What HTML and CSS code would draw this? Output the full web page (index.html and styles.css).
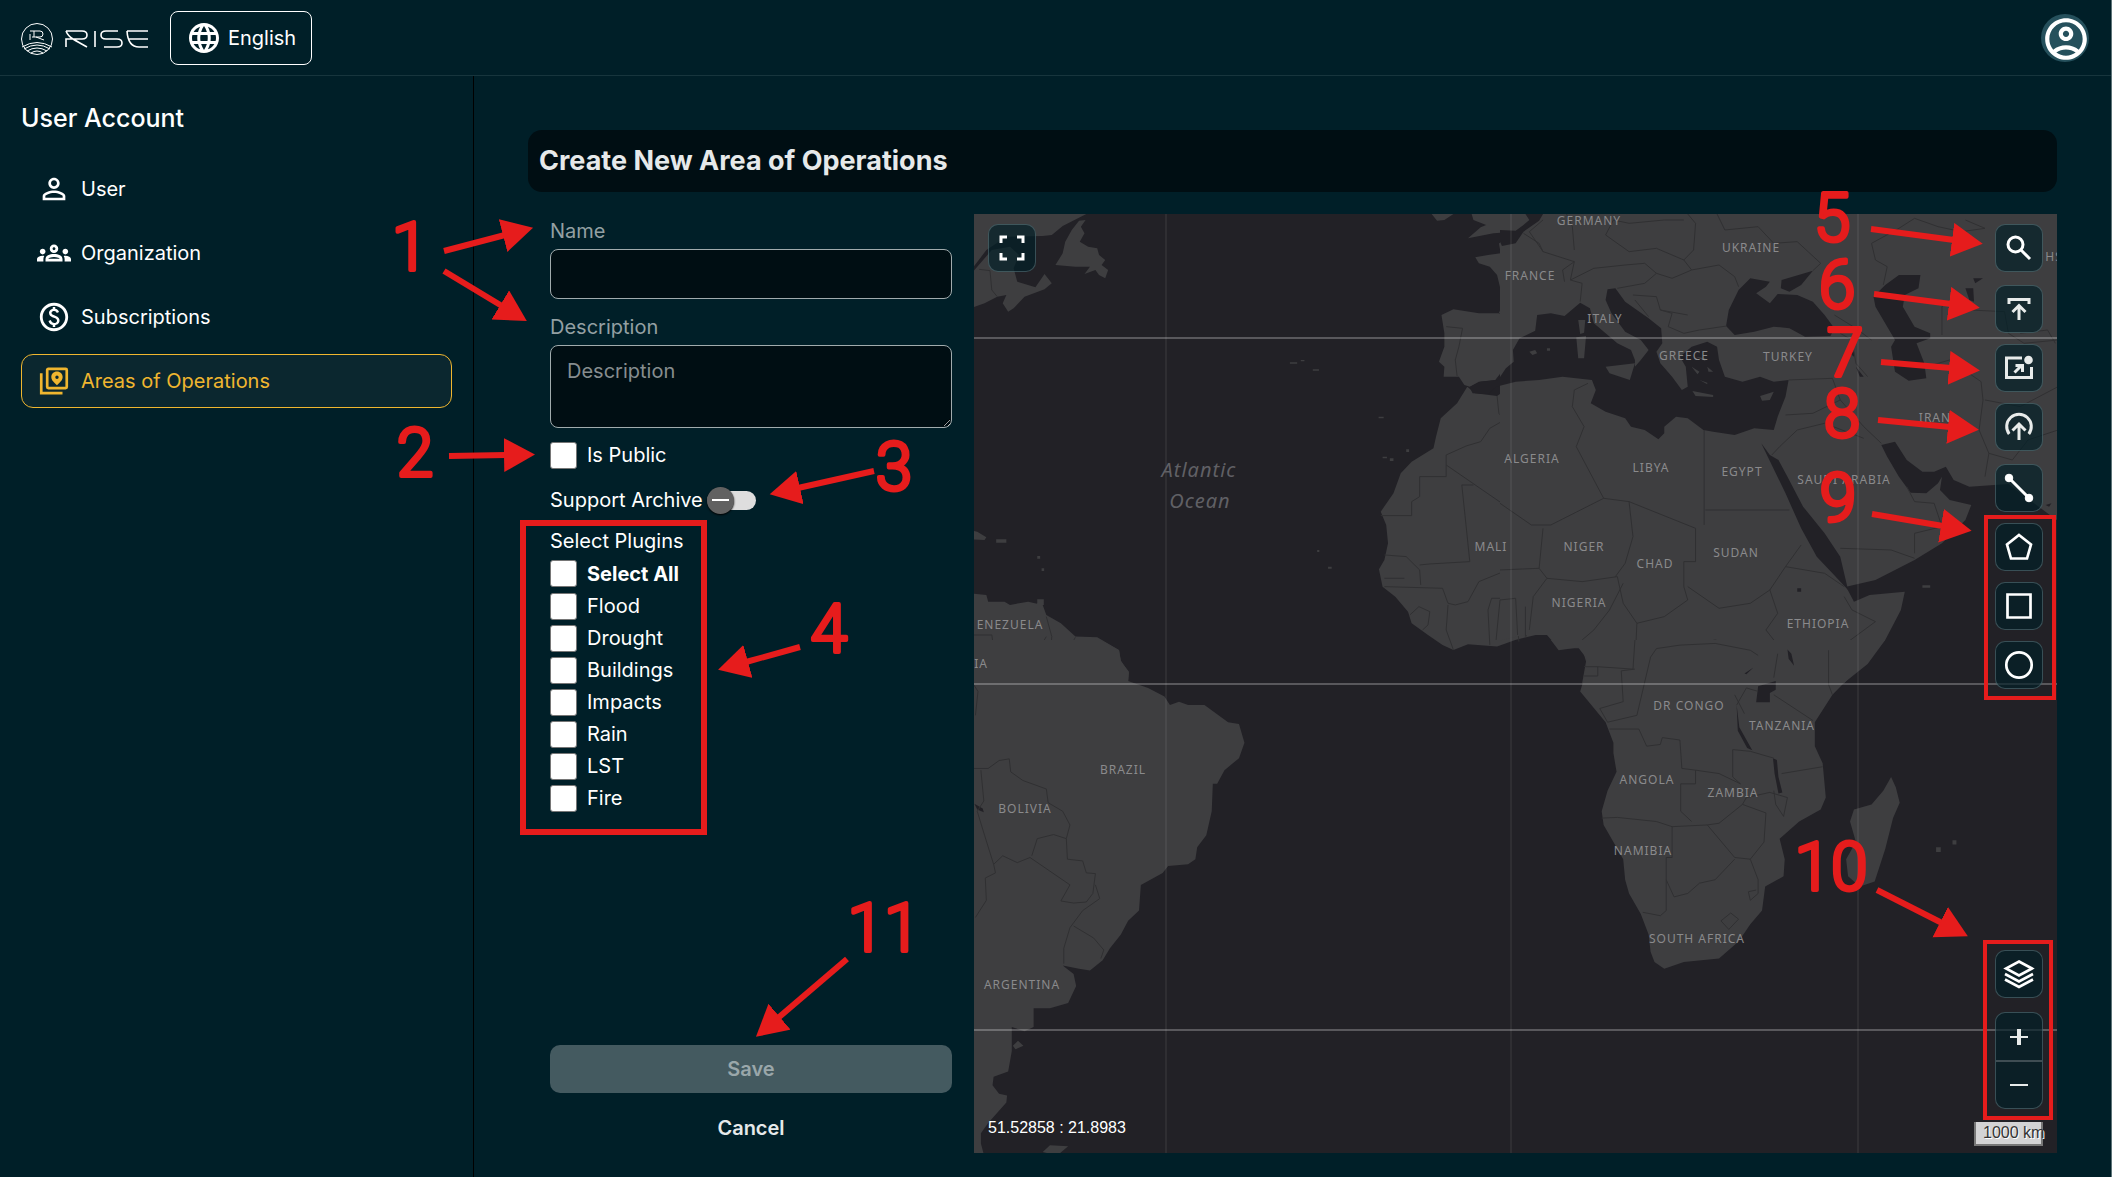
FILE: index.html
```html
<!DOCTYPE html>
<html lang="en">
<head>
<meta charset="utf-8">
<meta name="viewport" content="width=device-width, initial-scale=1">
<title>RISE - Create New Area of Operations</title>
<link rel="stylesheet" href="styles.css">
</head>
<body>
<div class="page">
  <header class="topbar">
    <a class="logo" href="#" aria-label="RISE">
      <svg width="128" height="34" viewBox="0 0 128 34" fill="none" stroke="#fff" stroke-width="1">
        <circle cx="17" cy="17" r="15.5"/>
        <path d="M10 9h10q3 0 3 3t-3 3h-8M14 9v6M10 12v6M16 15l8 3M2 25q15-9 30 0M4 27q13-8 26 0M7 29q10-6 20 0M11 31q6-4 12 0"/>
        <path stroke-width="1.6" d="M46 9H62q5 0 5 4t-5 4H50M46 9q2 5 7 8t14 8M46 25v-8h4M75 9v16M98 9H86q-5 0-5 4t5 4h11q5 0 5 4t-5 4H84M128 9H107M128 17h-19M107 9q1 16 12 16h9"/>
      </svg>
    </a>
    <button class="lang" type="button">
      <svg width="36" height="36" viewBox="0 0 24 24" fill="currentColor"><path d="M11.99 2C6.47 2 2 6.48 2 12s4.47 10 9.99 10C17.52 22 22 17.52 22 12S17.52 2 11.99 2zm6.93 6h-2.95c-.32-1.25-.78-2.45-1.38-3.56 1.84.63 3.37 1.91 4.33 3.56zM12 4.04c.83 1.2 1.48 2.53 1.91 3.96h-3.82c.43-1.43 1.08-2.76 1.91-3.96zM4.26 14C4.1 13.36 4 12.69 4 12s.1-1.36.26-2h3.38c-.08.66-.14 1.32-.14 2s.06 1.34.14 2H4.26zm.82 2h2.95c.32 1.25.78 2.45 1.38 3.56-1.84-.63-3.37-1.9-4.33-3.56zm2.95-8H5.08c.96-1.66 2.49-2.93 4.33-3.56C8.81 5.55 8.35 6.75 8.03 8zM12 19.96c-.83-1.2-1.48-2.53-1.91-3.96h3.82c-.43 1.43-1.08 2.76-1.91 3.96zM14.34 14H9.66c-.09-.66-.16-1.32-.16-2s.07-1.35.16-2h4.68c.09.65.16 1.32.16 2s-.07 1.34-.16 2zm.25 5.56c.6-1.11 1.06-2.31 1.38-3.56h2.95c-.96 1.65-2.49 2.93-4.33 3.56zM16.36 14c.08-.66.14-1.32.14-2s-.06-1.34-.14-2h3.38c.16.64.26 1.31.26 2s-.1 1.36-.26 2h-3.38z"/></svg>
      <span>English</span>
    </button>
    <button class="avatar" type="button" aria-label="Account">
      <svg width="50" height="50" viewBox="0 0 24 24" fill="currentColor"><path d="M12 2C6.48 2 2 6.48 2 12s4.48 10 10 10 10-4.48 10-10S17.52 2 12 2zM7.35 18.5C8.66 17.56 10.26 17 12 17s3.34.56 4.65 1.5c-1.31.94-2.91 1.5-4.65 1.5s-3.34-.56-4.65-1.5zm10.79-1.38C16.45 15.8 14.32 15 12 15s-4.45.8-6.14 2.12C4.7 15.73 4 13.95 4 12c0-4.42 3.58-8 8-8s8 3.58 8 8c0 1.95-.7 3.73-1.86 5.12zM12 6c-1.93 0-3.5 1.57-3.5 3.5S10.07 13 12 13s3.5-1.57 3.5-3.5S13.93 6 12 6zm0 5c-.83 0-1.5-.67-1.5-1.5S11.17 8 12 8s1.5.67 1.5 1.5S12.83 11 12 11z"/></svg>
    </button>
  </header>

  <div class="body">
    <aside class="sidebar">
      <h2 class="sidebar-title">User Account</h2>
      <nav class="menu">
        <a class="menu-item" href="#">
          <svg width="34" height="34" viewBox="0 0 24 24" fill="currentColor"><path d="M12 5.9c1.16 0 2.1.94 2.1 2.1s-.94 2.1-2.1 2.1S9.9 9.16 9.9 8s.94-2.1 2.1-2.1m0 9c2.97 0 6.1 1.46 6.1 2.1v1.1H5.9V17c0-.64 3.13-2.1 6.1-2.1M12 4C9.79 4 8 5.79 8 8s1.79 4 4 4 4-1.79 4-4-1.79-4-4-4zm0 9c-2.67 0-8 1.34-8 4v3h16v-3c0-2.66-5.33-4-8-4z"/></svg>
          User
        </a>
        <a class="menu-item" href="#">
          <svg width="34" height="34" viewBox="0 0 24 24" fill="currentColor"><path d="M4 13c1.1 0 2-.9 2-2s-.9-2-2-2-2 .9-2 2 .9 2 2 2zm1.13 1.1c-.37-.06-.74-.1-1.13-.1-.99 0-1.93.21-2.78.58C.48 14.9 0 15.62 0 16.43V18h4.5v-1.61c0-.83.23-1.61.63-2.29zM20 13c1.1 0 2-.9 2-2s-.9-2-2-2-2 .9-2 2 .9 2 2 2zm4 3.43c0-.81-.48-1.53-1.22-1.85-.85-.37-1.79-.58-2.78-.58-.39 0-.76.04-1.13.1.4.68.63 1.46.63 2.29V18H24v-1.57zm-7.76-2.78c-1.17-.52-2.61-.9-4.24-.9s-3.07.39-4.24.9C6.68 14.13 6 15.21 6 16.39V18h12v-1.61c0-1.18-.68-2.26-1.76-2.74zM8.07 16c.09-.23.13-.39.91-.69.97-.38 1.99-.56 3.02-.56s2.05.18 3.02.56c.77.3.81.46.91.69H8.07zM12 8c.55 0 1 .45 1 1s-.45 1-1 1-1-.45-1-1 .45-1 1-1m0-2c-1.66 0-3 1.34-3 3s1.34 3 3 3 3-1.34 3-3-1.34-3-3-3z"/></svg>
          Organization
        </a>
        <a class="menu-item" href="#">
          <svg width="34" height="34" viewBox="0 0 24 24" fill="currentColor"><path d="M12 2C6.48 2 2 6.48 2 12s4.48 10 10 10 10-4.48 10-10S17.52 2 12 2zm0 18c-4.41 0-8-3.59-8-8s3.59-8 8-8 8 3.59 8 8-3.59 8-8 8zm.89-8.9c-1.78-.59-2.64-.96-2.64-1.9 0-1.02 1.11-1.39 1.81-1.39 1.31 0 1.79.99 1.9 1.34l1.58-.67c-.15-.44-.82-1.91-2.66-2.23V5h-1.75v1.26c-2.6.56-2.62 2.85-2.62 2.96 0 2.27 2.25 2.91 3.35 3.31 1.58.56 2.28 1.07 2.28 2.03 0 1.13-1.05 1.61-1.98 1.61-1.82 0-2.34-1.87-2.4-2.09l-1.66.67c.63 2.19 2.28 2.78 3.02 2.96V19h1.75v-1.24c.52-.09 3.02-.59 3.02-3.22.01-1.39-.6-2.61-3-3.44z"/></svg>
          Subscriptions
        </a>
        <a class="menu-item active" href="#" aria-current="page">
          <svg width="34" height="34" viewBox="0 0 24 24" fill="none" stroke="currentColor"><rect x="7.2" y="3.4" width="13.8" height="13.6" rx=".8" stroke-width="1.9"/><path stroke-width="1.9" d="M3 6.6V20.6H18"/><path fill="currentColor" stroke="none" fill-rule="evenodd" d="M14.1 5.3c2.3 0 4 1.7 4 3.9 0 2.4-2 3.9-4 5.8-2-1.900-4-3.400-4-5.800 0-2.200 1.700-3.900 4-3.900zm0 2.900a1.200 1.200 0 1 0 0 2.400 1.200 1.200 0 0 0 0-2.400z"/></svg>
          Areas of Operations
        </a>
      </nav>
    </aside>

    <main class="main">
      <h1 class="title">Create New Area of Operations</h1>
      <div class="content">
        <form class="form">
          <label class="field-label" for="name">Name</label>
          <input class="field" id="name" type="text">
          <label class="field-label" for="desc">Description</label>
          <textarea class="field area" id="desc" placeholder="Description"></textarea>
          <label class="check"><input type="checkbox">Is Public</label>
          <label class="switch-row">Support Archive
            <input class="switch-input" type="checkbox">
            <span class="switch"></span>
          </label>
          <fieldset class="plugins">
            <legend>Select Plugins</legend>
            <label class="check all"><input type="checkbox">Select All</label>
            <label class="check"><input type="checkbox">Flood</label>
            <label class="check"><input type="checkbox">Drought</label>
            <label class="check"><input type="checkbox">Buildings</label>
            <label class="check"><input type="checkbox">Impacts</label>
            <label class="check"><input type="checkbox">Rain</label>
            <label class="check"><input type="checkbox">LST</label>
            <label class="check"><input type="checkbox">Fire</label>
          </fieldset>
          <div class="actions">
            <button class="save" type="submit" disabled>Save</button>
            <button class="cancel" type="button">Cancel</button>
          </div>
        </form>

        <section class="map" aria-label="Map">
          <svg class="map-canvas" viewBox="0 0 1083 939" preserveAspectRatio="xMidYMid slice">
            <rect width="1083" height="939" fill="#222126"/>
            <!-- north-west tile -->
            <g transform="translate(-4 -14) scale(.3635 .3333)">
              <g class="land">
                <path d="M0 42H320L255 78 225 105 200 108 100 110 45 150 0 215Z"/>
                <path d="M0 225L60 150 110 140 135 165 120 205 130 245 180 262 205 222 225 250 205 268 150 290 120 325 105 335 90 310 100 285 75 290 40 310 0 325Z"/>
                <path d="M318 60L305 80 315 100 302 125 325 140 350 145 355 165 372 180 362 195 380 210 372 235 355 225 345 210 315 222 330 200 290 200 235 195 255 160 262 125 280 90 300 62Z"/>
                <path d="M1270 42H1330L1305 60 1285 62ZM1380 42H1510L1475 65 1505 75 1500 95 1440 100 1370 115 1405 82 1420 75 1385 60Z"/>
                <path d="M1568 65L1520 90 1520 105 1490 125 1455 130 1460 160 1425 165 1390 172 1400 190 1430 200 1450 225 1460 270 1465 310 1455 340 1400 340 1330 328 1297 345 1305 400 1305 440 1290 485 1305 500 1303 530 1345 530 1360 555 1375 560 1400 545 1445 540 1470 505 1490 485 1488 450 1510 415 1550 390 1555 350 1568 335Z"/>
                <path d="M1368 560L1340 610 1295 655 1282 710 1275 745 1215 785 1185 820 1165 880 1130 935 1145 975 1150 1030 1140 1080 1125 1108 1135 1160 1170 1190 1205 1235 1215 1270 1260 1305 1300 1335 1330 1350 1370 1333 1450 1340 1500 1320 1568 1302V535L1500 550 1450 588 1390 580Z"/>
                <path d="M0 1180L45 1185 50 1205 95 1205 110 1215 160 1205 200 1215 210 1245 250 1270 290 1310 350 1312 410 1350 415 1385 437 1415 435 1450H0ZM0 990L20 995 45 1012 40 1020 0 1018ZM72 1018H100V1028H72ZM185 1198H203V1215H185Z"/>
                <path d="M880 487h20v4h-20zM910 480h10v4h-10zM943 508h17v4h-17zM1124 650h14v5h-14zM1135 770h12v5h-12zM1155 775h10v8h-10zM1200 748h8v8h-8zM185 1068h8v8h-8zM197 1105h7v8h-7zM985 1100h10v6h-10zM955 1050h6v6h-6z"/>
              </g>
              <g class="border">
                <path d="M25 208L55 212 60 270 75 290M1310 380L1355 385 1345 440 1335 480 1340 528M1455 340L1500 355 1555 370M1450 588L1455 640 1470 660 1430 685 1405 725 1365 738 1310 765V830H1237V890L1215 905V947H1130M1310 795L1490 930 1555 980 1568 1010M1385 855H1353L1375 1085 1265 1092 1237 1095M1140 1065L1200 1070 1237 1110 1240 1155M1140 1160L1300 1165 1315 1210 1335 1215 1370 1205 1400 1145 1490 1105 1568 1100M1140 1135H1195M1210 1245L1235 1220 1265 1235 1260 1275 1245 1290M1315 1215L1310 1290 1330 1350M1430 1335L1425 1230 1435 1195 1500 1195 1510 1325M1500 1195L1530 1210V1310M1548 1210V1305"/>
                <path d="M10 1305H60L70 1380 100 1430 150 1395 125 1355 190 1345 210 1310M210 1250L225 1310 220 1380 240 1415 285 1400 275 1340 290 1312M345 1320L340 1395 370 1390 410 1350M340 1395H305"/>
              </g>
            </g>
            <!-- north-east tile -->
            <g transform="translate(526 -14) scale(.3911 .3333)">
              <path class="land" d="M0 42H1430V965L1400 940 1300 852 1200 860 1160 840 1140 800 1110 815 1080 815 1040 780 1010 725 975 735 990 770 1020 830 1050 878 1090 880 1120 850 1130 830 1125 870 1150 900 1205 915 1190 960 1130 1030 1060 1080 960 1140 885 1160 905 1205 945 1185 1035 1175 1025 1230 985 1320 880 1450H210L220 1385 210 1345 150 1345 120 1305 60 1305 0 1322Z"/>
              <g class="water">
                <path d="M0 90L40 92 60 75 75 60 65 42H110L100 62 60 95 40 130 5 138 0 125Z"/>
                <path d="M-78 562L-50 545-5 540 15 505 35 485 33 450 50 415 90 392 95 345 130 340 165 348 205 308 230 325 240 370 300 430 335 450 345 480 345 500 360 480 380 450 360 420 320 395 285 340 270 300 275 268 295 265 320 305 380 355 412 385 415 430 400 455 410 490 440 530 465 570 480 560 475 500 460 470 490 440 530 425 555 440 560 480 575 530 620 545 665 530 700 545 738 540 730 590 710 650 700 690 650 685 600 705 545 695 520 690 480 655 450 650 420 680 420 700 405 718 370 690 335 680 320 655 270 635 232 610 245 570 235 540 160 530 100 540 40 545-10 560-30 582-70 580Z"/>
                <path d="M640 235L690 245 680 260 655 280 690 310 710 282 760 285 800 305 830 345 855 385 845 408 780 410 740 385 700 380 650 395 600 405 578 378 585 330 610 270ZM720 240L800 212 770 255 740 275 718 265Z"/>
                <path d="M985 255L1020 225 1075 225 1070 265 1035 285 1030 320 1060 380 1100 400 1100 415 1065 430 1085 490 1090 535 1045 542 1010 515 1000 440 1010 420 960 320 955 290ZM1190 265L1210 265 1212 305 1200 300ZM1210 235H1235L1215 250ZM910 500L930 530H920ZM890 455H905V470Z"/>
                <path d="M668 730L690 765 712 780 735 830 775 920 830 1000 870 1070 890 1170 850 1120 810 1070 770 985 730 880ZM760 1165h10v10h-10zM740 1340L752 1390 740 1370ZM1395 915l15-5-6 10z"/>
                <path d="M645 1400L630 1425 640 1415Z"/>
              </g>
              <g class="land">
                <path d="M200 360H218L215 398 205 402ZM195 412L220 408 215 475H200ZM270 500L345 490 332 540 280 520ZM492 573L545 585V591L500 588ZM665 588L700 575 690 600 670 602ZM75 455l15-5 5 10-12 5zM120 445h8v7h-8zM490 500l20 15-5 8zM500 470l25 5v8zM530 500l15 15h-12zM510 540l20 8v5zM1080 1156h20v7h-20z"/>
              </g>
              <g class="border">
                <path d="M60 100L100 130 110 155 190 185 180 240 210 250 205 305M110 155L75 95 110 60M190 185L160 210 165 245M190 150L185 80 170 42M270 105L290 60 330 70 420 60 470 60M270 105L330 155 400 145 470 180M180 240L240 205 320 195 370 190 400 220 370 250 300 265M470 180L495 150 500 70 480 42M470 180L490 210 560 195 600 230 610 260M400 220L440 235 490 210M340 285L400 290 410 330 440 340 430 380 470 400 510 390 580 378M345 300L380 350M410 330L480 345M555 42L575 90 660 80 700 130 760 125 820 190 800 212M855 345L910 385 950 420M870 400L900 420 910 490 940 530M950 130L960 180 990 200 980 255M950 130L1020 85 1060 55 1120 80 1180 95 1240 85 1190 60M1130 405V320L1170 285 1200 330 1290 335 1300 400 1340 430 1427 420M1330 400L1400 390 1420 430M1090 500L1150 480 1230 545 1235 600 1225 690 1250 760 1240 830M1240 600L1330 620 1427 560M1250 760L1310 780 1350 720 1427 690M738 540L850 535 870 600 930 680 975 730M730 645L800 640 870 600M715 740L760 690 830 670 930 715M715 740L695 765M522 690V975M525 930H740M0 910L80 975 130 975 265 895 195 740 215 680 185 620 190 570 225 550M265 895L330 905 500 985M330 905L340 1010 320 1090 295 1130M500 985V1085H470V1160L480 1200 420 1250 350 1270 315 1210 300 1130 210 1145 120 1135 100 1105 110 985M100 1105L0 1110M120 1135L85 1190 75 1290M0 1200L40 1195 45 1305M315 1150L280 1230 240 1290 210 1320M480 1160L560 1225 640 1210 690 1170 730 1100 770 1035M690 1170L710 1240 680 1290 720 1350 850 1360 960 1265 900 1230 880 1190M730 1100L830 1120 880 1160M870 1045L1000 1050 1060 1075M1060 1000V1060M1060 1000L1130 980 1110 910 1060 905 1040 860M350 1270L345 1400M350 1390L420 1330 480 1340 550 1320 640 1345 720 1350M660 1440L700 1370M850 1360L840 1440M215 1400H345M-10 1320L0 1200M65 1310V1220"/>
              </g>
            </g>
            <!-- south-west tile -->
            <g transform="translate(-4 426) scale(.3635 .3425)">
              <path class="land" d="M0 0H360L410 30 415 60 437 95 435 120 490 140 535 165 550 190 575 180 600 190 645 190 710 240 740 245 755 300 740 345 700 380 680 420 668 420 665 500 650 570 625 605 620 640 600 655 545 660 530 680 470 715 465 790 435 820 415 860 385 900 365 935 330 965 300 960 255 950 285 975 292 1010 270 1060 220 1075 175 1075 175 1130 150 1142 115 1130 115 1200 105 1260 65 1275 62 1300 80 1325 102 1330 100 1350 50 1410 30 1440 30 1470 40 1510H0ZM200 1495L220 1475 270 1478 240 1505ZM118 1185L132 1170 147 1185 125 1195Z"/>
              <path class="water" d="M12 478L35 492 38 503 20 495Z"/>
              <g class="border">
                <path d="M10 375L50 375 80 352 108 347 112 385 145 410 210 435 215 475 255 500 275 540 265 580 268 640 310 645 320 680 345 682 338 740 320 765 285 768 250 762 275 715 165 635 130 650 90 630 65 655 40 570 20 500 38 470 30 380M170 630L185 580 230 568 265 580M65 655L70 680 42 695 45 760 15 810M345 715L357 755 310 790 275 840 258 900 258 945M285 835L340 870 368 905 360 930M10 130L22 150 15 220"/>
              </g>
            </g>
            <!-- south-east tile -->
            <g transform="translate(526 426) scale(.3911 .3425)">
              <path class="land" d="M130 0L150 30 200 22 222 55 220 80 213 120 205 150 270 240 290 300 290 330 298 385 275 440 260 500 265 540 290 590 315 640 320 700 330 740 360 800 380 860 385 910 395 940 420 960 470 940 560 930 610 880 640 830 670 790 678 720 725 690 728 640 715 580 765 530 820 495 833 460 825 360 805 310 805 240 850 160 880 125 940 70 985 0ZM1000 400L1012 430 1022 475 1005 520 985 610 958 705 920 720 890 690 885 640 910 590 895 530 905 495 950 480 980 440ZM1115 605h12v14h-12zM1157 585h10v12h-10z"/>
              <path class="water" d="M660 135L705 120 705 145 690 155 690 182 655 182ZM735 28L745 40 752 75 738 55ZM605 190L612 255 645 322 632 315 608 265ZM698 345L708 350 712 400 722 445 712 448 702 390ZM648 80L630 100 625 98Z"/>
              <g class="border">
                <path d="M220 78H250V105H215M250 78L340 85 345 0M345 85L310 90 315 180 255 200 275 240 350 220 385 50 400 25 460 15 550 10 640 30M280 260H355L375 310 410 305 415 285 460 292 465 375 500 380V420H462V500L490 530M260 520L300 518 400 530 440 545 530 540 560 535 620 480 680 505 675 590 640 640 600 635 530 540M440 545V635H425V790L410 805 365 795M425 700L445 750 480 740 510 710 550 700 600 640M640 640L660 700V740L640 760 635 735 655 730M565 820L590 797 610 815 585 845ZM500 380L560 390 615 420 595 400V320L640 325 700 345M620 480L630 460 690 445 735 460 725 515 705 480 700 440M720 390L825 370M700 160L800 235M605 190L630 140 660 150M600 160L625 215M700 110L710 40M840 30V130L850 160M640 30L660 45"/>
              </g>
            </g>
            <g class="graticule">
              <path class="lat" d="M0 124H1083M0 470H1083M0 816H1083"/>
              <path class="lon" d="M192 0V939M537 0V939M884 0V939"/>
            </g>
            <g class="country">
              <text x="615" y="11">GERMANY</text><text x="777" y="38">UKRAINE</text>
              <text x="556" y="66">FRANCE</text><text x="631" y="109">ITALY</text>
              <text x="710" y="146">GREECE</text><text x="814" y="147">TURKEY</text>
              <text x="961" y="208">IRAN</text><text x="558" y="249">ALGERIA</text>
              <text x="677" y="258">LIBYA</text><text x="768" y="262">EGYPT</text>
              <text x="870" y="270">SAUDI ARABIA</text><text x="517" y="337">MALI</text>
              <text x="610" y="337">NIGER</text><text x="681" y="354">CHAD</text>
              <text x="762" y="343">SUDAN</text><text x="605" y="393">NIGERIA</text>
              <text x="844" y="414">ETHIOPIA</text><text x="715" y="496">DR CONGO</text>
              <text x="808" y="516">TANZANIA</text><text x="673" y="570">ANGOLA</text>
              <text x="759" y="583">ZAMBIA</text><text x="669" y="641">NAMIBIA</text>
              <text x="723" y="729">SOUTH AFRICA</text><text x="149" y="560">BRAZIL</text>
              <text x="51" y="599">BOLIVIA</text><text x="48" y="775">ARGENTINA</text>
              <text x="36" y="415">ENEZUELA</text><text x="7" y="454">IA</text>
              <text x="1080" y="47">HS</text>
            </g>
            <g class="ocean">
              <text x="225" y="263">Atlantic</text><text x="226" y="294">Ocean</text>
            </g>
          </svg>

          <button class="tool fullscreen" type="button" aria-label="Full screen">
            <svg width="28" height="28" viewBox="0 0 28 28" fill="none" stroke="#fff" stroke-width="3"><path d="M3 9V3H9M19 3H25V9M25 19V25H19M9 25H3V19"/></svg>
          </button>
          <div class="tools">
            <button class="tool" type="button" aria-label="Search">
              <svg width="30" height="30" viewBox="0 0 30 30" fill="none" stroke="#fff" stroke-width="3"><circle cx="11.500" cy="11.500" r="7.500"/><path d="M17 17L26 26"/></svg>
            </button>
            <div class="group">
              <button class="tool" type="button" aria-label="Upload file">
                <svg width="30" height="30" viewBox="0 0 30 30" fill="none" stroke="#e8ebea" stroke-width="3"><path d="M5 10V5.500H25V10M15 26V12M8.500 18L15 11.500 21.500 18"/></svg>
              </button>
              <button class="tool" type="button" aria-label="Import area">
                <svg width="30" height="30" viewBox="0 0 30 30" fill="none" stroke="#e8ebea" stroke-width="3"><path d="M18 5H2.500V24.500H27.500V14"/><circle cx="24.500" cy="7" r="4.300" fill="#e8ebea" stroke="none"/><path d="M10.500 19.500L18 12M11.500 12.500H18.500V19"/></svg>
              </button>
              <button class="tool" type="button" aria-label="Upload shape">
                <svg width="30" height="30" viewBox="0 0 30 30" fill="none" stroke="#e8ebea" stroke-width="3"><path d="M5.200 22A12.300 12.300 0 1 1 24.800 22M15 28V13M8.500 18.500L15 12 21.500 18.500"/></svg>
              </button>
            </div>
            <div class="group">
              <button class="tool" type="button" aria-label="Draw line">
                <svg width="30" height="30" viewBox="0 0 30 30" fill="#fff" stroke="#fff"><path stroke-width="3" d="M5 5L25 25"/><circle cx="5" cy="5" r="3.800"/><circle cx="25" cy="25" r="3.800"/></svg>
              </button>
              <button class="tool" type="button" aria-label="Draw polygon">
                <svg width="30" height="30" viewBox="0 0 30 30" fill="none" stroke="#fff" stroke-width="2.700"><path d="M15 3L27 12.500 23 26.500H7L3 12.500Z"/></svg>
              </button>
              <button class="tool" type="button" aria-label="Draw rectangle">
                <svg width="30" height="30" viewBox="0 0 30 30" fill="none" stroke="#fff" stroke-width="2.700"><path d="M3.500 3.500H26.500V26.500H3.500Z"/></svg>
              </button>
              <button class="tool" type="button" aria-label="Draw circle">
                <svg width="30" height="30" viewBox="0 0 30 30" fill="none" stroke="#fff" stroke-width="2.700"><circle cx="15" cy="15" r="12.700"/></svg>
              </button>
            </div>
          </div>
          <div class="tools-bottom">
            <button class="tool" type="button" aria-label="Layers">
              <svg width="32" height="32" viewBox="0 0 32 32" fill="none" stroke="#fff" stroke-width="2.600"><path d="M16 3.500L29 10.500 16 17.500 3 10.500ZM2 16L16 23.500 30 16M2 21.500L16 29 30 21.500"/></svg>
            </button>
            <div class="zoom">
              <button type="button" aria-label="Zoom in"><svg width="18" height="18" viewBox="0 0 18 18" stroke="#e8ebea"><path stroke-width="2" d="M0 9H18"/><path stroke-width="4" d="M9 1V17"/></svg></button>
              <button type="button" aria-label="Zoom out"><svg width="18" height="18" viewBox="0 0 18 18" stroke="#e8ebea"><path stroke-width="2" d="M0 9H18"/></svg></button>
            </div>
            <div class="scale">1000 km</div>
          </div>
          <div class="coords">51.52858 : 21.8983</div>
        </section>
      </div>
    </main>
  </div>

  <!-- numbered call-outs that explain the controls -->
  <svg class="callouts" viewBox="0 0 2112 1177" preserveAspectRatio="xMidYMin meet">
    <defs>
      <marker id="head" markerUnits="userSpaceOnUse" markerWidth="32" markerHeight="36" refX="2" refY="17" orient="auto"><path d="M0 0L31 17 0 34Z" fill="#e61c1c"/></marker>
    </defs>
    <g class="arrows">
      <path d="M444 251L505 235"/><path d="M444 271L502 306"/>
      <path d="M449 456L506 455"/><path d="M874 471L798 488"/>
      <path d="M800 647L746 662"/><path d="M1871 229L1954 240"/>
      <path d="M1874 294L1951 304"/><path d="M1881 362L1951 368"/>
      <path d="M1878 420L1950 427"/><path d="M1872 514L1943 526"/>
      <path d="M1877 890L1942 923"/><path d="M847 959L778 1018"/>
    </g>
    <g class="frames">
      <rect class="thick" x="523" y="523" width="181" height="309"/>
      <rect x="1986" y="517" width="68" height="181"/>
      <rect x="1985" y="942" width="66" height="176"/>
    </g>
    <g class="numbers">
      <text x="410" y="270">1</text><text x="415" y="476">2</text>
      <text x="894" y="490">3</text><text x="829" y="652">4</text>
      <text x="1832" y="241">5</text><text x="1837" y="308">6</text>
      <text x="1845" y="376">7</text><text x="1842" y="437">8</text>
      <text x="1838" y="521">9</text><text x="1831" y="890">10</text>
      <text x="884" y="951">11</text>
    </g>
  </svg>
</div>
</body>
</html>
```

FILE: styles.css
```css
* { box-sizing: border-box; }

body {
  margin: 0;
  background: #001f28;
  color: #fff;
  font-family: Inter, "Liberation Sans", sans-serif;
  font-size: 20px;
  line-height: 24px;
}

button, input, textarea { font: inherit; color: inherit; }
button { cursor: pointer; }
svg { display: block; flex: none; }

.page {
  position: relative;
  display: flex;
  flex-direction: column;
  min-height: 100vh;
  border-right: 1px solid #5d7478;
}

.topbar {
  display: flex;
  align-items: center;
  height: 76px;
  padding: 0 22px 0 20px;
  border-bottom: 1px solid #17353d;
}
.logo { margin: 3px 22px 0 0; }
.lang {
  display: flex;
  align-items: center;
  gap: 6px;
  height: 54px;
  padding: 0 15px;
  background: none;
  border: 1px solid #fff;
  border-radius: 8px;
}
.avatar {
  display: grid;
  place-items: center;
  width: 48px;
  height: 48px;
  margin-left: auto;
  padding: 0;
  color: #fff;
  background: #25505c;
  border: 0;
  border-radius: 50%;
}

.body { display: flex; flex: 1; }

.sidebar {
  width: 474px;
  padding: 26px 21px 0 21px;
  border-right: 1px solid #000;
}
.sidebar-title {
  margin: 0 0 28px;
  font-size: 25px;
  font-weight: 500;
  line-height: 32px;
}
.menu { display: flex; flex-direction: column; gap: 10px; }
.menu-item {
  display: flex;
  align-items: center;
  gap: 10px;
  height: 54px;
  padding: 0 15px;
  color: #fff;
  text-decoration: none;
  border: 1px solid transparent;
  border-radius: 12px;
}
.menu-item.active {
  color: #f0b62f;
  background: #0b272f;
  border-color: #f0b62f;
}

.main {
  display: flex;
  flex: 1;
  flex-direction: column;
  gap: 22px;
  min-width: 0;
  padding: 54px 54px 24px;
}
.title {
  margin: 0;
  padding: 15px 11px;
  color: #e6e9ea;
  font-size: 27px;
  line-height: 32px;
  background: #000e13;
  border-radius: 14px;
}
.content {
  display: grid;
  flex: 1;
  grid-template-columns: 446px 1fr;
}

.form {
  display: flex;
  flex-direction: column;
  padding: 0 22px 1px;
}
.field-label {
  margin: 5px 0 6px;
  color: #93a0a3;
}
.field {
  width: 100%;
  height: 50px;
  margin: 0 0 11px;
  padding: 13px 16px;
  background: #000e13;
  border: 1px solid #a0abad;
  border-radius: 8px;
}
.area { height: 83px; resize: vertical; }
.area::placeholder { color: #868d8f; opacity: 1; }

.check {
  display: flex;
  align-items: center;
  gap: 10px;
  height: 32px;
}
.check input {
  appearance: none;
  width: 27px;
  height: 27px;
  margin: 0;
  background: #fff;
  border: 1px solid #767676;
  border-radius: 3px;
}
.switch-row {
  display: flex;
  align-items: center;
  gap: 4px;
  height: 32px;
  margin: 13px 0 10px;
}
.switch-input {
  position: absolute;
  opacity: 0;
}
.switch {
  position: relative;
  width: 49px;
  height: 19px;
  background: #dedede;
  border-radius: 10px;
}
.switch::before {
  content: "";
  position: absolute;
  top: -4px;
  left: 0;
  width: 27px;
  height: 27px;
  background: linear-gradient(#fff, #fff) center / 17px 2px no-repeat #616161;
  border-radius: 50%;
  box-shadow: 0 1px 2px #000;
}
.plugins {
  display: flex;
  flex-direction: column;
  margin: 0;
  padding: 0;
  border: 0;
}
.plugins legend {
  padding: 0;
  line-height: 31px;
}
.all { height: 33px; font-weight: 700; }

.actions {
  display: flex;
  flex-direction: column;
  gap: 11px;
  margin-top: auto;
}
.save, .cancel {
  height: 48px;
  font-weight: 600;
  border: 0;
  border-radius: 10px;
}
.save { color: #9aa7aa; background: #445a60; }
.cancel { color: #e6e9ea; background: none; }

.map {
  position: relative;
  overflow: hidden;
}
.map-canvas {
  position: absolute;
  inset: 0;
  width: 100%;
  height: 100%;
}
.land { fill: #3e3e40; }
.water { fill: #222126; }
.border path, .graticule path {
  fill: none;
  vector-effect: non-scaling-stroke;
}
.border path { stroke: #303032; stroke-width: 1px; stroke-linejoin: round; }
.lat { stroke: rgb(255 255 255 / 25%); stroke-width: 2px; }
.lon { stroke: rgb(255 255 255 / 12%); stroke-width: 1px; }
.country {
  fill: #8a8a8c;
  font: 12px "Noto Sans", sans-serif;
  letter-spacing: 1px;
  text-anchor: middle;
}
.ocean {
  fill: #606065;
  font: italic 20px "Noto Sans", sans-serif;
  letter-spacing: 1px;
  text-anchor: middle;
}

.tool {
  display: grid;
  place-items: center;
  width: 48px;
  height: 48px;
  padding: 0;
  background: rgb(0 30 39 / 65%);
  border: 1px solid rgb(150 185 190 / 32%);
  border-radius: 10px;
}
.fullscreen { position: absolute; top: 10px; left: 14px; }
.tools, .tools-bottom {
  position: absolute;
  right: 14px;
  display: flex;
  flex-direction: column;
}
.tools { top: 10px; gap: 13px; }
.tools-bottom { bottom: 7px; align-items: flex-end; }
.group { display: flex; flex-direction: column; gap: 11px; }
.zoom {
  width: 48px;
  margin: 14px 0 13px;
  background: rgb(0 30 39 / 65%);
  border: 1px solid rgb(150 185 190 / 32%);
  border-radius: 10px;
}
.zoom button {
  display: grid;
  place-items: center;
  width: 100%;
  height: 47px;
  padding: 0;
  background: none;
  border: 0;
}
.zoom button + button { height: 48px; border-top: 2px solid #3f4d53; }
.scale {
  width: 69px;
  height: 24px;
  padding-left: 7px;
  color: #333;
  font: 16px/22px "Liberation Sans", sans-serif;
  white-space: nowrap;
  text-shadow: 1px 1px #fff;
  background: #d3d3d4;
  border: 2px solid #777;
  border-top: 0;
}
.coords {
  position: absolute;
  bottom: 13px;
  left: 14px;
  font: 16px/24px "Liberation Sans", sans-serif;
}

.callouts {
  position: absolute;
  top: 0;
  left: 0;
  width: 100vw;
  pointer-events: none;
}
.arrows path {
  fill: none;
  stroke: #e61c1c;
  stroke-width: 6px;
  marker-end: url(#head);
}
.frames rect { fill: none; stroke: #e61c1c; stroke-width: 4px; }
.frames .thick { stroke-width: 6px; }
.numbers {
  fill: #e61c1c;
  stroke: #e61c1c;
  stroke-width: 4px;
  stroke-linejoin: round;
  font: 300 66px Roboto, sans-serif;
  text-anchor: middle;
}
```
